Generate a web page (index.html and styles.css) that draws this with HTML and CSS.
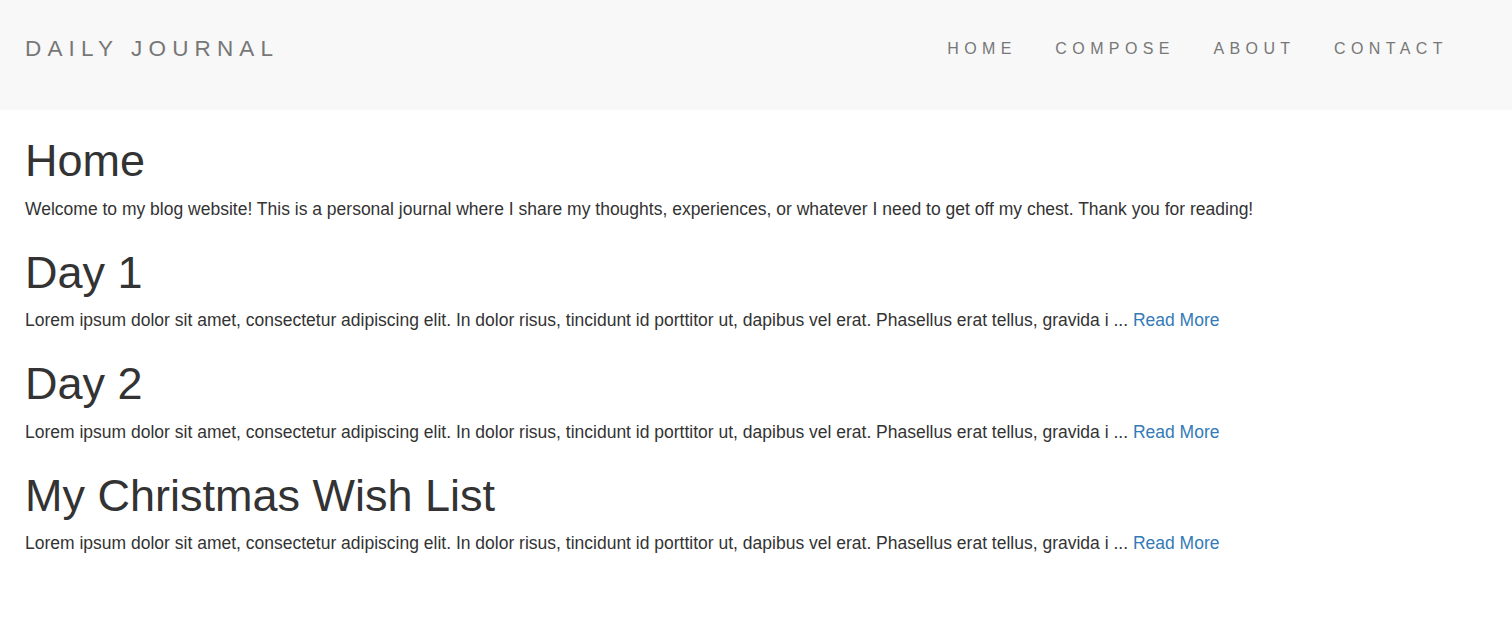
FILE: index.html
```html
<!DOCTYPE html>
<html lang="en">
<head>
<meta charset="utf-8">
<title>Daily Journal</title>
<link rel="stylesheet" href="styles.css">
</head>
<body>
<nav class="navbar">
  <a class="brand" href="#">DAILY JOURNAL</a>
  <ul class="nav-links">
    <li><a href="#">HOME</a></li>
    <li><a href="#">COMPOSE</a></li>
    <li><a href="#">ABOUT</a></li>
    <li><a href="#">CONTACT</a></li>
  </ul>
</nav>
<main class="content">
  <h1>Home</h1>
  <p>Welcome to my blog website! This is a personal journal where I share my thoughts, experiences, or whatever I need to get off my chest. Thank you for reading!</p>
  <h1>Day 1</h1>
  <p>Lorem ipsum dolor sit amet, consectetur adipiscing elit. In dolor risus, tincidunt id porttitor ut, dapibus vel erat. Phasellus erat tellus, gravida i ... <a href="#">Read More</a></p>
  <h1>Day 2</h1>
  <p>Lorem ipsum dolor sit amet, consectetur adipiscing elit. In dolor risus, tincidunt id porttitor ut, dapibus vel erat. Phasellus erat tellus, gravida i ... <a href="#">Read More</a></p>
  <h1>My Christmas Wish List</h1>
  <p>Lorem ipsum dolor sit amet, consectetur adipiscing elit. In dolor risus, tincidunt id porttitor ut, dapibus vel erat. Phasellus erat tellus, gravida i ... <a href="#">Read More</a></p>
</main>
</body>
</html>
```
FILE: styles.css
```css
html, body {
  margin: 0;
  padding: 0;
}
body {
  font-family: "Liberation Sans", Arial, sans-serif;
  font-size: 17.5px;
  line-height: 25px;
  color: #333;
  background: #fff;
}
a {
  color: #337ab7;
  text-decoration: none;
}
.navbar {
  height: 110px;
  background: #f8f8f8;
  display: flex;
  justify-content: space-between;
  align-items: flex-start;
  padding: 0 25px;
  box-sizing: border-box;
}
.brand {
  color: #777;
  font-size: 22.5px;
  letter-spacing: 6.15px;
  line-height: 25px;
  margin-top: 36px;
}
.nav-links {
  list-style: none;
  display: flex;
  margin: 36px 39px 0 0;
  padding: 0;
}
.nav-links li {
  margin-left: 38.5px;
}
.nav-links a {
  color: #777;
  font-size: 16px;
  letter-spacing: 5.4px;
  line-height: 25px;
}
.content {
  padding: 0 25px;
}
h1 {
  font-weight: 400;
  font-size: 45px;
  line-height: 49.5px;
  margin: 26px 0 11px;
  color: #333;
}
p {
  margin: 0;
}
```
